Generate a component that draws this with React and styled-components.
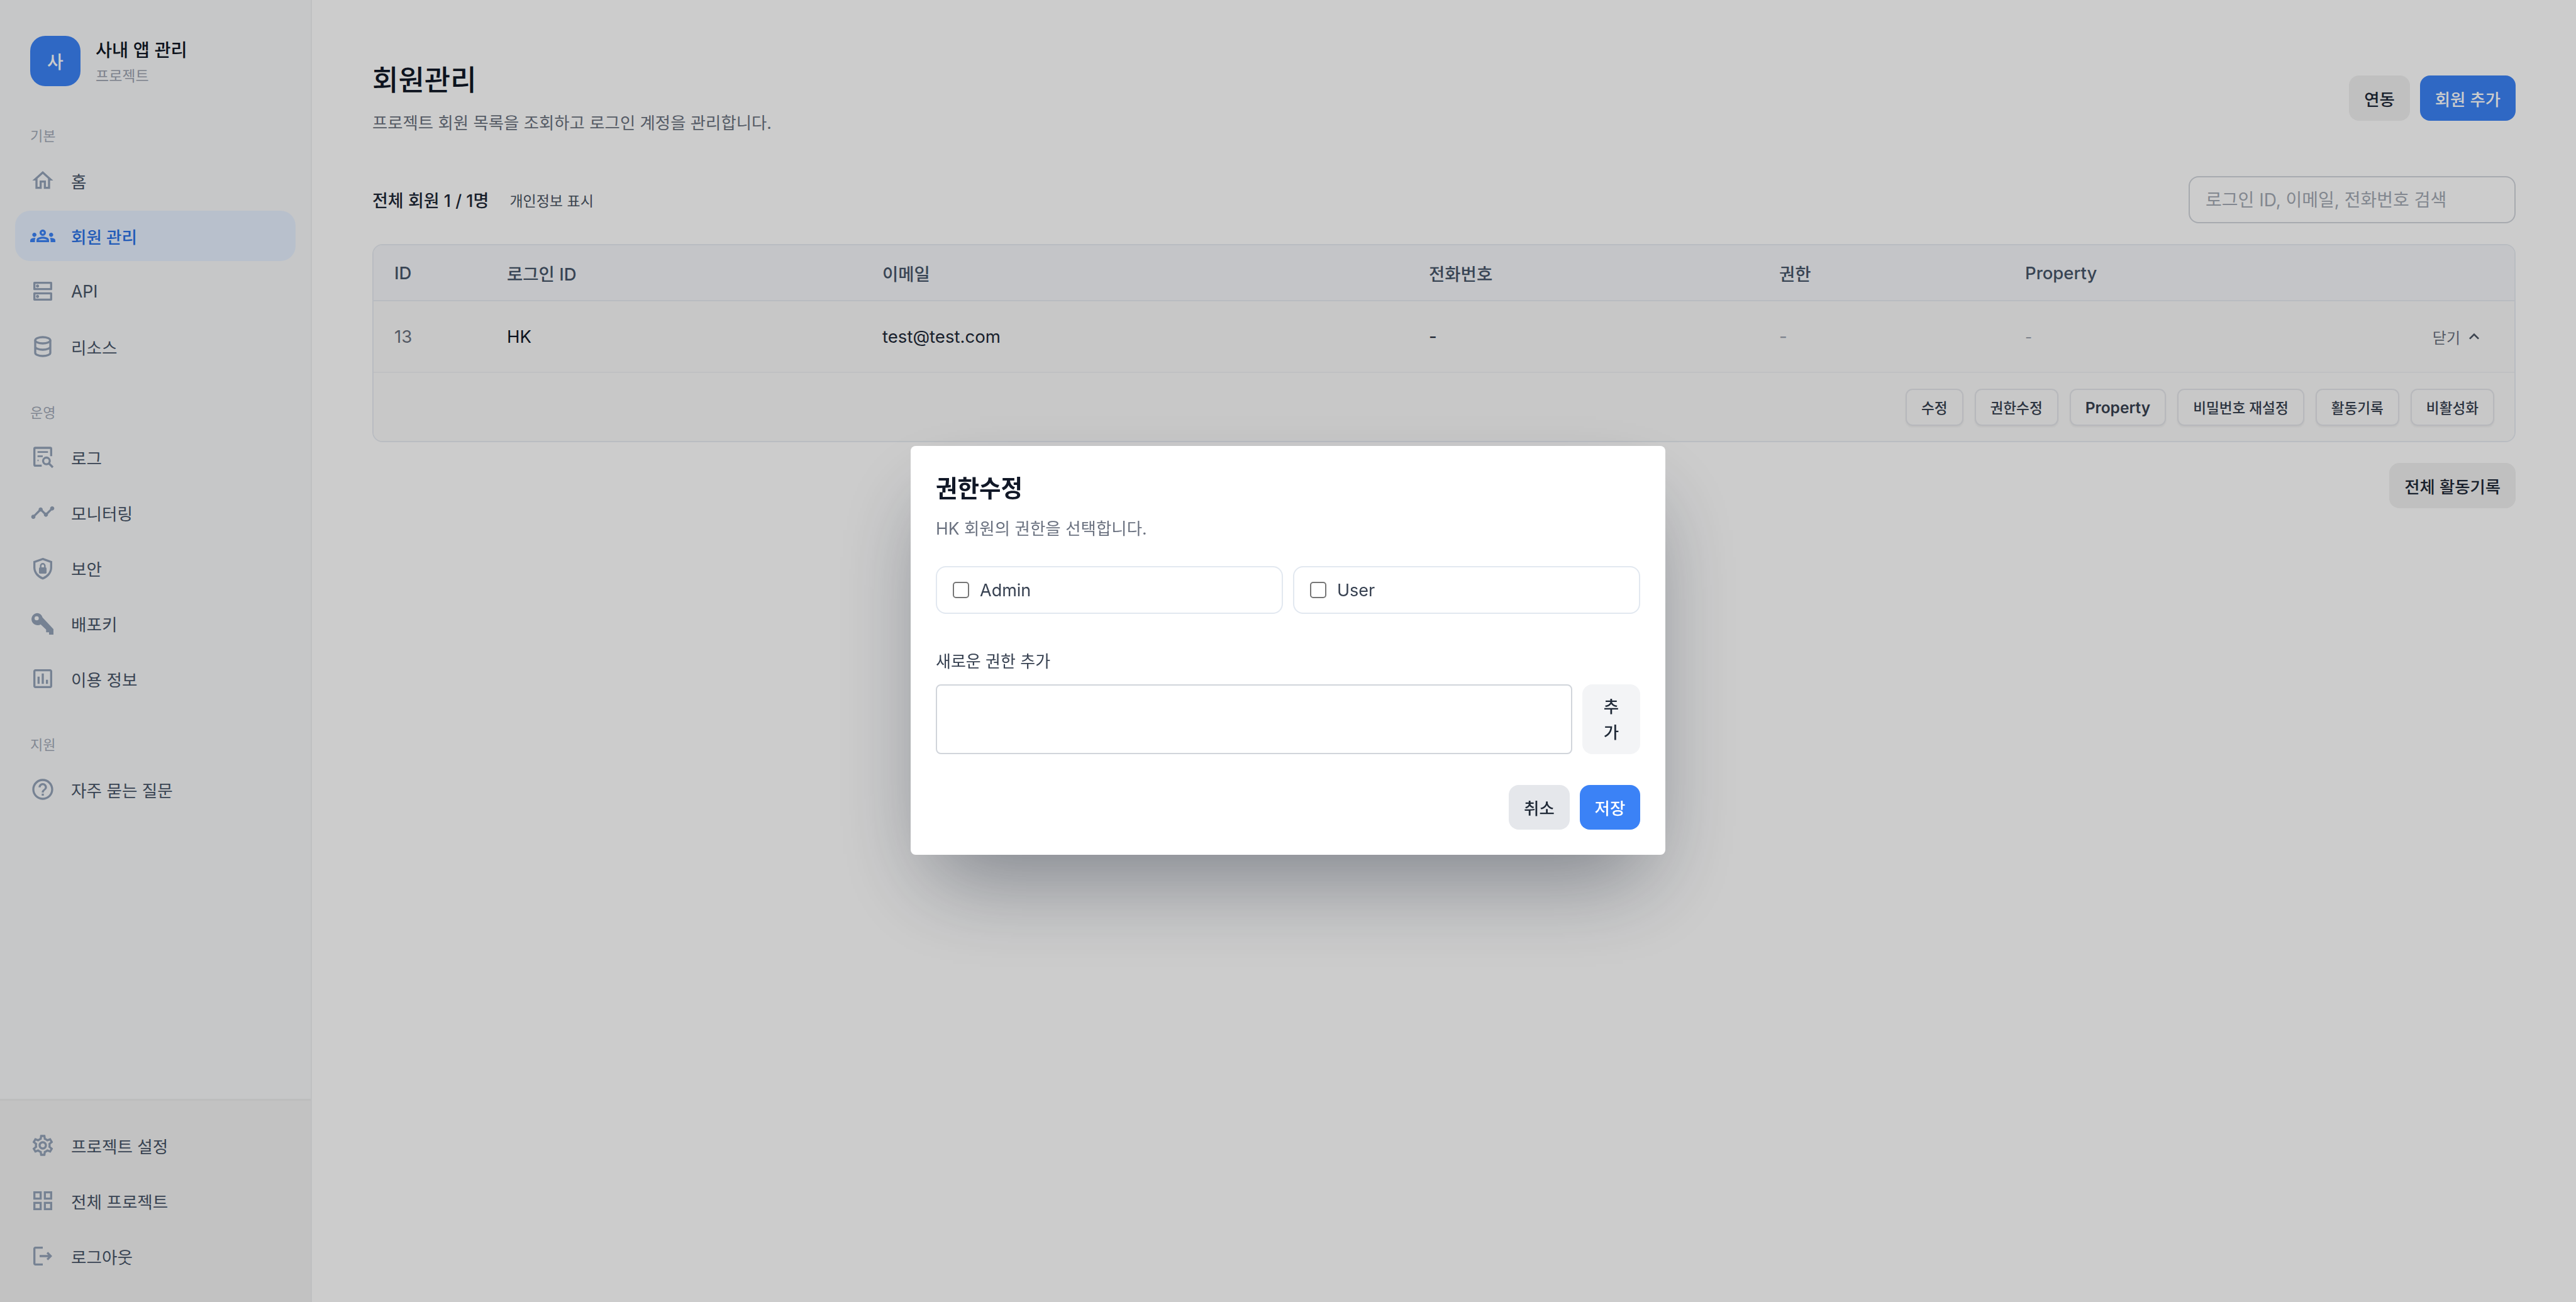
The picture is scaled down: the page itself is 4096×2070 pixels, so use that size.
import React from 'react';
import styled, { createGlobalStyle } from 'styled-components';
import {
  MdOutlineHome, MdOutlineGroups, MdOutlineDns, MdTimeline, MdOutlineAssessment,
  MdOutlineHelpOutline, MdOutlineSettings, MdOutlineGridView, MdOutlineLogout, MdKeyboardArrowUp,
} from 'react-icons/md';

const FONT = `Inter, "Noto Sans CJK KR", "Noto Sans", sans-serif`;

const Global = createGlobalStyle`
  html, body { margin: 0; padding: 0; background: #fff; }
  body { font-family: ${FONT}; }
  * { box-sizing: border-box; }
  button, input, textarea { font-family: inherit; }
`;

const Page = styled.div`
  display: grid;
  grid-template-columns: 496px 1fr;
  width: 4096px;
  height: 2070px;
  overflow: hidden;
`;

const Sidebar = styled.aside`
  display: flex;
  flex-direction: column;
  background: #f8f9fb;
  border-right: 2px solid #eff0f2;
`;
const SideTop = styled.div`
  flex: 1;
  padding: 57px 0 0 24px;
`;
const Brand = styled.div`
  display: flex;
  align-items: center;
  gap: 24px;
  padding-left: 24px;
  margin-bottom: 64px;
`;
const BrandMark = styled.div`
  width: 80px;
  height: 80px;
  border-radius: 24px;
  background: #3b82f6;
  color: #fff;
  font-size: 28px;
  font-weight: 500;
  display: flex;
  align-items: center;
  justify-content: center;
`;
const BrandName = styled.div`
  font-size: 28.4px;
  line-height: 42px;
  font-weight: 500;
  color: #111827;
`;
const BrandSub = styled.div`
  font-size: 23px;
  line-height: 30px;
  color: #9ca3af;
  margin-top: 5px;
`;
const GroupLabel = styled.div`
  font-size: 22px;
  line-height: 30px;
  font-weight: 400;
  color: #a3abb8;
  padding-left: 24px;
  margin-bottom: 16px;
`;
const Group = styled.nav`
  display: flex;
  flex-direction: column;
  gap: 8px;
  margin-bottom: 50px;
`;
const NavItem = styled.div`
  display: flex;
  align-items: center;
  gap: 25px;
  width: 446px;
  height: 80px;
  padding: 0 24px;
  border-radius: 24px;
  font-size: 26.6px;
  font-weight: ${p => (p.$active ? 500 : 400)};
  color: ${p => (p.$active ? '#2b72e6' : '#475467')};
  background: ${p => (p.$active ? '#e6f1ff' : 'transparent')};
`;
const NavIcon = styled.span`
  width: 40px;
  height: 40px;
  flex: none;
  display: flex;
  align-items: center;
  justify-content: center;
  color: ${p => (p.$active ? '#3b82f6' : '#94a3b8')};
  svg { display: block; }
`;
const SideFoot = styled.div`
  display: flex;
  flex-direction: column;
  gap: 8px;
  padding: 31px 0 33px 24px;
  background: #f3f3f3;
  border-top: 3px solid #eceded;
`;

const Main = styled.main`
  padding: 96px 96px 0 96px;
  background: #fff;
  min-width: 0;
`;
const Header = styled.header`
  display: flex;
  align-items: center;
  justify-content: space-between;
  height: 120px;
  margin-bottom: 64px;
`;
const Title = styled.h1`
  margin: 0;
  font-size: 45px;
  line-height: 64px;
  font-weight: 500;
  color: #111827;
`;
const Desc = styled.p`
  margin: 14px 0 0;
  font-size: 26.4px;
  line-height: 42px;
  color: #6b7280;
`;
const BtnRow = styled.div`
  display: flex;
  gap: 16px;
`;
const SoftButton = styled.button`
  height: 72px;
  padding: 0 24px;
  border: 0;
  border-radius: 16px;
  background: #f0f0f0;
  color: #1f2937;
  font-size: 26.4px;
  font-weight: 500;
`;
const PrimaryButton = styled(SoftButton)`
  background: #3b82f6;
  color: #fff;
`;
const Toolbar = styled.div`
  display: flex;
  align-items: center;
  justify-content: space-between;
  margin-bottom: 33px;
`;
const Counts = styled.div`
  display: flex;
  align-items: center;
  gap: 33px;
`;
const Count = styled.span`
  font-size: 27px;
  font-weight: 500;
  color: #1f2937;
`;
const MaskToggle = styled.span`
  font-size: 23px;
  font-weight: 400;
  color: #4b5563;
`;
const Search = styled.input`
  width: 520px;
  height: 75px;
  padding: 0 25px;
  border: 2px solid #d1d5db;
  border-radius: 16px;
  background: #fff;
  font-size: 28px;
  outline: none;
  &::placeholder { color: #a3a9b3; }
`;
const TableBox = styled.section`
  border: 2px solid #e8ecf2;
  border-radius: 16px;
  overflow: hidden;
`;
const Row = styled.div`
  display: grid;
  grid-template-columns: 179px 597px 869px 557px 391px 745px;
  align-items: center;
  padding: 0 33px;
`;
const HeadRow = styled(Row)`
  height: 89px;
  background: #f5f7fa;
  border-bottom: 2px solid #e8ecf2;
  font-size: 27.5px;
  font-weight: 500;
  color: #475569;
`;
const BodyRow = styled(Row)`
  height: 114px;
  background: #f9f9f9;
  border-bottom: 2px solid #f1f2f4;
  font-size: 27.6px;
  color: #1f2937;
`;
const Cell = styled.div`
  color: ${p => p.$color || 'inherit'};
`;
const PropertyCell = styled(Cell)`
  margin-right: auto;
`;
const Toggle = styled.div`
  display: flex;
  align-items: center;
  justify-content: flex-end;
  gap: 6px;
  padding-right: 15px;
  font-size: 24px;
  color: #6b7280;
  svg { display: block; color: #4b5563; }
`;
const Actions = styled.div`
  display: flex;
  justify-content: flex-end;
  gap: 18px;
  padding: 25px 32px 24px;
  background: #fafafa;
`;
const SmallButton = styled.button`
  height: 59px;
  padding: 0 23px;
  border: 2px solid #e5e7eb;
  border-radius: 11px;
  background: #fafafa;
  box-shadow: 0 2px 3px rgba(0, 0, 0, 0.05);
  color: #374151;
  font-size: ${p => (p.$latin ? '24.500px' : '22.600px')};
  font-weight: ${p => (p.$latin ? 600 : 500)};
`;
const Below = styled.div`
  display: flex;
  justify-content: flex-end;
  margin-top: 33px;
`;

const Overlay = styled.div`
  position: fixed;
  inset: 0;
  padding-bottom: 2px;
  display: flex;
  align-items: center;
  justify-content: center;
  background: rgba(0, 0, 0, 0.2);
`;
const Modal = styled.div`
  width: 1200px;
  padding: 40px;
  background: #fff;
  border-radius: 8px;
  box-shadow: 0 66px 133px -32px rgba(15, 23, 42, 0.42);
`;
const ModalTitle = styled.h2`
  margin: 0;
  font-size: 37.500px;
  line-height: 56px;
  font-weight: 600;
  color: #111827;
`;
const ModalDesc = styled.p`
  margin: 15px 0 1px;
  font-size: 26.500px;
  line-height: 40px;
  color: #6b7280;
`;
const Options = styled.div`
  display: grid;
  grid-template-columns: 1fr 1fr;
  gap: 16px;
  margin-top: 40px;
`;
const Option = styled.label`
  display: flex;
  align-items: center;
  gap: 17px;
  height: 76px;
  padding: 0 25px;
  border: 2px solid #e2e8f0;
  border-radius: 16px;
  font-size: 27px;
  color: #374151;
`;
const Check = styled.input.attrs({ type: 'checkbox' })`
  appearance: none;
  width: 26px;
  height: 26px;
  margin: 0;
  border: 2px solid #767676;
  border-radius: 5px;
  background: #fff;
`;
const FieldLabel = styled.div`
  margin-top: 58px;
  font-size: 26px;
  line-height: 36px;
  font-weight: 400;
  color: #374151;
`;
const AddRow = styled.div`
  display: flex;
  gap: 16px;
  margin-top: 18px;
`;
const Area = styled.textarea`
  flex: 1;
  height: 111px;
  border: 2px solid #d1d5db;
  border-radius: 8px;
  resize: none;
  outline: none;
  background: #fff;
`;
const AddButton = styled.button`
  width: 92px;
  height: 111px;
  padding: 0 24px;
  border: 0;
  border-radius: 16px;
  background: #f3f4f6;
  color: #1f2937;
  font-size: 26.500px;
  line-height: 41px;
  font-weight: 500;
`;
const ModalFoot = styled.div`
  display: flex;
  justify-content: flex-end;
  gap: 16px;
  margin-top: 49px;
`;
const CancelButton = styled.button`
  width: 97px;
  height: 71px;
  border: 0;
  border-radius: 16px;
  background: #e5e7eb;
  color: #1f2937;
  font-size: 26.500px;
  font-weight: 500;
`;
const SaveButton = styled(CancelButton)`
  width: 96px;
  background: #3b82f6;
  color: #fff;
`;

const Svg = ({ children }) => (
  <svg width="40" height="40" viewBox="0 0 24 24" fill="none" stroke="currentColor" strokeWidth="2">{children}</svg>
);
const DbIcon = () => (
  <Svg>
    <ellipse cx="12" cy="6" rx="7.2" ry="3" />
    <path d="M4.8 6v12c0 1.700 3.200 3 7.200 3s7.200-1.300 7.200-3V6M4.800 12c0 1.700 3.200 3 7.200 3s7.200-1.300 7.200-3" />
  </Svg>
);
const LogIcon = () => (
  <Svg>
    <path d="M20 11V4a1 1 0 0 0-1-1H5a1 1 0 0 0-1 1v15a1 1 0 0 0 1 1h6" />
    <path d="M7 7h10M7 11h5M7 15h1" strokeWidth="1.600" />
    <circle cx="15.500" cy="15.500" r="3.200" />
    <path d="M18 18l3.600 3.600" />
  </Svg>
);
const ShieldIcon = () => (
  <Svg>
    <path d="M12 3.400l8 2.800v5.400c0 4.700-3.400 8.700-8 10.400-4.600-1.700-8-5.700-8-10.400V6.200l8-2.800z" />
    <rect x="8.400" y="11.400" width="7.200" height="6" rx="1" fill="currentColor" stroke="none" />
    <path d="M10 11.400V10a2 2 0 0 1 4 0v1.400" strokeWidth="1.500" />
  </Svg>
);
const KeyIcon = () => (
  <svg width="40" height="40" viewBox="0 0 24 24" fill="currentColor" fillRule="evenodd">
    <path d="M7 2.200a5.800 5.800 0 1 0 3 10.800L15.200 18v2.500H18v2.300h4.200v-5.300L11.800 6.500A5.800 5.800 0 0 0 7 2.200zM6.200 5.200a2 2 0 1 1 0 4 2 2 0 0 1 0-4z" />
  </svg>
);

const NAV = [
  { label: '기본', items: [
    { text: '홈', icon: <MdOutlineHome size={40} /> },
    { text: '회원 관리', icon: <MdOutlineGroups size={40} />, active: true },
    { text: 'API', icon: <MdOutlineDns size={40} /> },
    { text: '리소스', icon: <DbIcon /> },
  ] },
  { label: '운영', items: [
    { text: '로그', icon: <LogIcon /> },
    { text: '모니터링', icon: <MdTimeline size={40} /> },
    { text: '보안', icon: <ShieldIcon /> },
    { text: '배포키', icon: <KeyIcon /> },
    { text: '이용 정보', icon: <MdOutlineAssessment size={40} /> },
  ] },
  { label: '지원', items: [
    { text: '자주 묻는 질문', icon: <MdOutlineHelpOutline size={40} /> },
  ] },
];
const FOOT = [
  { text: '프로젝트 설정', icon: <MdOutlineSettings size={40} /> },
  { text: '전체 프로젝트', icon: <MdOutlineGridView size={40} /> },
  { text: '로그아웃', icon: <MdOutlineLogout size={40} /> },
];
const ACTIONS = ['수정', '권한수정', 'Property', '비밀번호 재설정', '활동기록', '비활성화'];

const Item = ({ text, icon, active }) => (
  <NavItem $active={active}>
    <NavIcon $active={active}>{icon}</NavIcon>
    {text}
  </NavItem>
);

export default function App() {
  return (
    <>
      <Global />
      <Page>
        <Sidebar>
          <SideTop>
            <Brand>
              <BrandMark>사</BrandMark>
              <div>
                <BrandName>사내 앱 관리</BrandName>
                <BrandSub>프로젝트</BrandSub>
              </div>
            </Brand>
            {NAV.map(g => (
              <div key={g.label}>
                <GroupLabel>{g.label}</GroupLabel>
                <Group>
                  {g.items.map(i => <Item key={i.text} {...i} />)}
                </Group>
              </div>
            ))}
          </SideTop>
          <SideFoot>
            {FOOT.map(i => <Item key={i.text} {...i} />)}
          </SideFoot>
        </Sidebar>
        <Main>
          <Header>
            <div>
              <Title>회원관리</Title>
              <Desc>프로젝트 회원 목록을 조회하고 로그인 계정을 관리합니다.</Desc>
            </div>
            <BtnRow>
              <SoftButton>연동</SoftButton>
              <PrimaryButton>회원 추가</PrimaryButton>
            </BtnRow>
          </Header>
          <Toolbar>
            <Counts>
              <Count>전체 회원 1 / 1명</Count>
              <MaskToggle>개인정보 표시</MaskToggle>
            </Counts>
            <Search placeholder="로그인 ID, 이메일, 전화번호 검색" />
          </Toolbar>
          <TableBox>
            <HeadRow>
              <div>ID</div><div>로그인 ID</div><div>이메일</div><div>전화번호</div><div>권한</div><div>Property</div>
            </HeadRow>
            <BodyRow>
              <Cell $color="#6b7280">13</Cell>
              <Cell $color="#111827">HK</Cell>
              <Cell>test@test.com</Cell>
              <Cell>-</Cell>
              <Cell $color="#9ca3af">-</Cell>
              <Toggle>
                <PropertyCell $color="#9ca3af">-</PropertyCell>
                닫기 <MdKeyboardArrowUp size={32} />
              </Toggle>
            </BodyRow>
            <Actions>
              {ACTIONS.map(a => <SmallButton key={a} $latin={a === 'Property'}>{a}</SmallButton>)}
            </Actions>
          </TableBox>
          <Below>
            <SoftButton>전체 활동기록</SoftButton>
          </Below>
        </Main>
      </Page>
      <Overlay>
        <Modal>
          <ModalTitle>권한수정</ModalTitle>
          <ModalDesc>HK 회원의 권한을 선택합니다.</ModalDesc>
          <Options>
            <Option><Check />Admin</Option>
            <Option><Check />User</Option>
          </Options>
          <FieldLabel>새로운 권한 추가</FieldLabel>
          <AddRow>
            <Area />
            <AddButton>추가</AddButton>
          </AddRow>
          <ModalFoot>
            <CancelButton>취소</CancelButton>
            <SaveButton>저장</SaveButton>
          </ModalFoot>
        </Modal>
      </Overlay>
    </>
  );
}
